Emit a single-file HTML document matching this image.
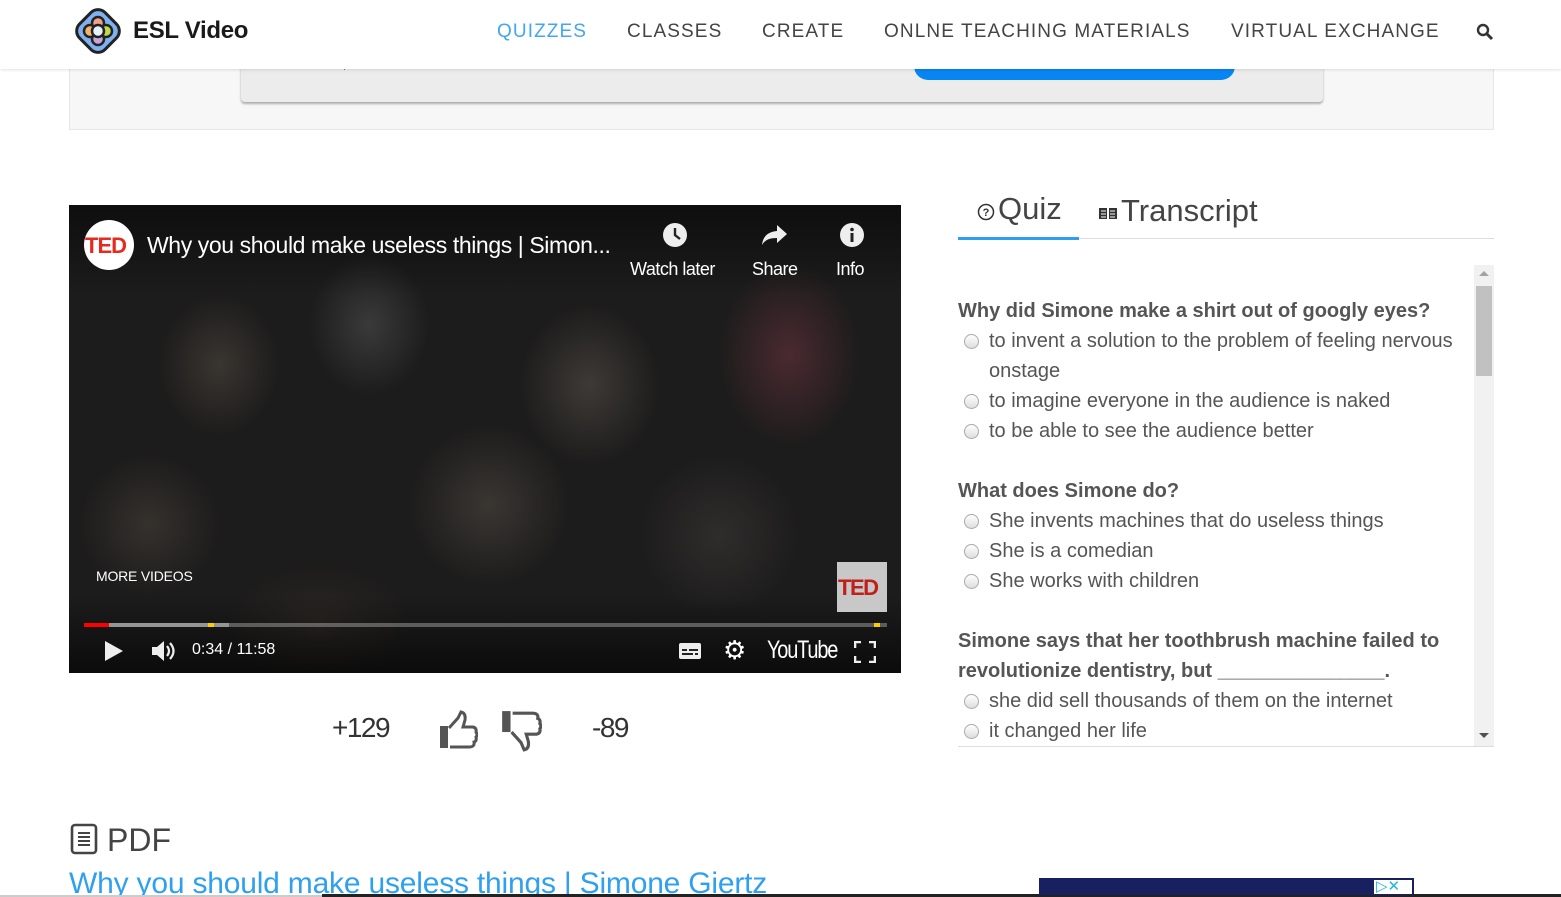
<!DOCTYPE html>
<html><head><meta charset="utf-8">
<style>
*{box-sizing:border-box;margin:0;padding:0}
html,body{width:1561px;height:897px;overflow:hidden;background:#fff;font-family:"Liberation Sans",Arial,sans-serif;position:relative}
.abs{position:absolute}
.nav{left:0;top:0;width:1561px;height:69px;background:#fff;box-shadow:0 1px 3px rgba(0,0,0,.12);z-index:5}
.nav a{position:absolute;top:21px;font-size:19px;letter-spacing:1.1px;color:#444;text-decoration:none}
.q{font-size:20px;color:#555;font-weight:bold;line-height:30px}
.o{font-size:20px;color:#555;line-height:30px;padding-left:31px;position:relative}
.o:before{content:"";position:absolute;left:6px;top:8px;width:13px;height:13px;border-radius:50%;border:1px solid #aaa;background:linear-gradient(#fff,#ddd)}
.vid{left:69px;top:205px;width:832px;height:468px;overflow:hidden;
background:
radial-gradient(ellipse 60px 70px at 150px 160px,#3a3530,transparent),
radial-gradient(ellipse 60px 70px at 300px 120px,#3b3a3a,transparent),
radial-gradient(ellipse 70px 80px at 520px 180px,#3e3a36,transparent),
radial-gradient(ellipse 70px 90px at 720px 150px,#4a2a30,transparent),
radial-gradient(ellipse 80px 80px at 420px 300px,#3a3632,transparent),
radial-gradient(ellipse 70px 70px at 80px 320px,#35312d,transparent),
radial-gradient(ellipse 80px 80px at 650px 330px,#2f2d2c,transparent),
radial-gradient(ellipse 90px 60px at 250px 420px,#2a2622,transparent),
#1d1c1c}
.w{color:#fff;position:absolute}
</style></head><body>
<div class="abs" style="left:69px;top:60px;width:1425px;height:70px;background:#f7f7f7;border:1px solid #e6e6e6"></div>
<div class="abs" style="left:241px;top:60px;width:1082px;height:42px;background:#ececec;border-radius:0 0 4px 4px;box-shadow:0 2px 2px rgba(0,0,0,.3)"></div>
<div class="abs" style="left:914px;top:60px;width:321px;height:20px;background:#0785f2;border-radius:0 0 14px 14px"></div>
<div class="abs" style="left:344px;top:64px;width:1px;height:6px;background:#777"></div>

<div class="abs nav">
<svg class="abs" style="left:72px;top:5px" width="52" height="52" viewBox="0 0 52 52">
<rect x="8" y="8" width="36" height="36" rx="10" transform="rotate(45 26 26)" fill="#7fb0f0" stroke="#222" stroke-width="3"/>
<circle cx="26" cy="18" r="6" fill="#f3a08a" stroke="#222" stroke-width="2.5"/>
<circle cx="34" cy="26" r="6" fill="#c5d84a" stroke="#222" stroke-width="2.5"/>
<circle cx="26" cy="34" r="6" fill="#c9a6d8" stroke="#222" stroke-width="2.5"/>
<circle cx="18" cy="26" r="6" fill="#f4b36a" stroke="#222" stroke-width="2.5"/>
<circle cx="26" cy="26" r="6" fill="#e6f2fb" stroke="#222" stroke-width="2.5"/>
</svg>
<div class="abs" style="left:133px;top:17px;font-size:24px;font-weight:bold;color:#1a1a1a;letter-spacing:-.3px">ESL Video</div>
<a style="left:497px;color:#42a5f5">QUIZZES</a>
<a style="left:627px">CLASSES</a>
<a style="left:762px">CREATE</a>
<a style="left:884px">ONLNE TEACHING MATERIALS</a>
<a style="left:1231px">VIRTUAL EXCHANGE</a>
<svg class="abs" style="left:1476px;top:23px" width="18" height="18" viewBox="0 0 18 18"><circle cx="7" cy="7" r="5" fill="none" stroke="#333" stroke-width="2.4"/><path d="M11 11l5 5" stroke="#333" stroke-width="3"/></svg>
</div>

<div class="abs vid">
<div class="abs" style="left:0;top:0;width:832px;height:90px;background:linear-gradient(rgba(0,0,0,.5),transparent)"></div>
<div class="abs" style="left:0;top:390px;width:832px;height:78px;background:linear-gradient(transparent,rgba(0,0,0,.6))"></div>
<div class="abs" style="left:15px;top:15px;width:50px;height:50px;border-radius:50%;background:#fff"></div>
<div class="w" style="left:16px;top:28px;font-size:22px;font-weight:bold;color:#e62b1e;letter-spacing:-1px">TED</div>
<div class="w" style="left:78px;top:27px;font-size:23px;letter-spacing:-.4px">Why you should make useless things | Simon...</div>
<svg class="abs" style="left:593px;top:17px" width="26" height="26"><circle cx="13" cy="13" r="12" fill="#eee"/><path d="M13 6v7l5 4" stroke="#222" stroke-width="2.4" fill="none"/></svg>
<svg class="abs" style="left:692px;top:18px" width="28" height="24"><path d="M16 2l10 9-10 9v-5c-8 0-12 2-15 7 1-8 5-13 15-14z" fill="#eee"/></svg>
<svg class="abs" style="left:770px;top:17px" width="26" height="26"><circle cx="13" cy="13" r="12" fill="#eee"/><rect x="11.5" y="11" width="3" height="9" fill="#222"/><circle cx="13" cy="7.5" r="1.8" fill="#222"/></svg>
<div class="w" style="left:561px;top:54px;font-size:18px;letter-spacing:-.5px">Watch later</div>
<div class="w" style="left:683px;top:54px;font-size:18px;letter-spacing:-.5px">Share</div>
<div class="w" style="left:767px;top:54px;font-size:18px;letter-spacing:-.5px">Info</div>
<div class="w" style="left:27px;top:363px;font-size:14px;letter-spacing:-.2px">MORE VIDEOS</div>
<div class="abs" style="left:768px;top:357px;width:50px;height:50px;background:#c8c8c8"></div>
<div class="w" style="left:769px;top:370px;font-size:22px;font-weight:bold;color:#c0201a;letter-spacing:-1.5px">TED</div>
<div class="abs" style="left:15px;top:418px;width:803px;height:4px;background:rgba(255,255,255,.3)"></div>
<div class="abs" style="left:15px;top:418px;width:145px;height:4px;background:rgba(255,255,255,.35)"></div>
<div class="abs" style="left:15px;top:418px;width:25px;height:4px;background:#f00"></div>
<div class="abs" style="left:139px;top:418px;width:6px;height:4px;background:#fc0"></div>
<div class="abs" style="left:805px;top:418px;width:6px;height:4px;background:#fc0"></div>
<svg class="abs" style="left:35px;top:435px" width="20" height="22"><path d="M1 1l18 10L1 21z" fill="#eee"/></svg>
<svg class="abs" style="left:82px;top:434px" width="26" height="24"><path d="M1 8h5l7-6v20l-7-6H1z" fill="#eee"/><path d="M16 7q4 5 0 10M19 4q7 8 0 16" stroke="#eee" stroke-width="2.2" fill="none"/></svg>
<div class="w" style="left:123px;top:436px;font-size:16px">0:34 / 11:58</div>
<svg class="abs" style="left:609px;top:436px" width="24" height="20"><rect x="1" y="2" width="22" height="16" rx="2" fill="#eee"/><path d="M4 9h5M11 9h9M4 13h11M17 13h3" stroke="#222" stroke-width="2"/></svg>
<div class="w" style="left:654px;top:430px;font-size:26px">&#9881;</div>
<div class="w" style="left:698px;top:431px;font-size:25px;letter-spacing:-1.5px;transform:scaleX(.8);transform-origin:left">YouTube</div>
<svg class="abs" style="left:785px;top:436px" width="22" height="22"><path d="M1 7V1h6M15 1h6v6M21 15v6h-6M7 21H1v-6" stroke="#eee" stroke-width="2.6" fill="none"/></svg>
</div>

<div class="abs" style="left:332px;top:712px;font-size:28px;color:#333;letter-spacing:-1.5px">+129</div>
<svg class="abs" style="left:438px;top:709px" width="40" height="42" viewBox="0 0 40 42"><rect x="2" y="17" width="8" height="22" fill="#555"/><path d="M11 19l9-10 3-6q5 1 4 8l-2 7h10q4 1 3 5 2 3 0 5 1 4-2 5 1 5-5 5H12" fill="none" stroke="#555" stroke-width="3"/></svg>
<svg class="abs" style="left:500px;top:709px" width="42" height="44" viewBox="0 0 40 42"><rect x="2" y="2" width="8" height="20" fill="#555"/><path d="M11 22l9 10 3 7q5-1 4-8l-2-7h10q4-1 3-5 2-3 0-5 1-4-2-5 1-5-5-5H12" fill="none" stroke="#555" stroke-width="3"/></svg>
<div class="abs" style="left:592px;top:712px;font-size:28px;color:#333;letter-spacing:-1.5px">-89</div>

<div class="abs" style="left:958px;top:238px;width:536px;height:1px;background:#ddd"></div>
<div class="abs" style="left:958px;top:237px;width:121px;height:3px;background:#2f9ef0"></div>
<svg class="abs" style="left:977px;top:203px" width="18" height="18"><circle cx="9" cy="9" r="7.5" fill="none" stroke="#333" stroke-width="1.5"/><text x="9" y="13" font-size="11" font-weight="bold" text-anchor="middle" fill="#333" font-family="Liberation Sans">?</text></svg>
<div class="abs" style="left:998px;top:191px;font-size:31px;color:#444">Quiz</div>
<svg class="abs" style="left:1098px;top:206px" width="20" height="14"><path d="M1 2h8v11H1zM11 2h8v11h-8z" fill="#333"/><path d="M3 5h5M3 8h5M3 11h5M12 5h5M12 8h5M12 11h5" stroke="#fff" stroke-width="1"/></svg>
<div class="abs" style="left:1121px;top:193px;font-size:31px;color:#444">Transcript</div>

<div class="abs" style="left:1474px;top:265px;width:20px;height:482px;background:#f1f1f1"></div>
<div class="abs" style="left:1476px;top:286px;width:16px;height:90px;background:#c1c1c1"></div>
<div class="abs" style="left:1479px;top:271px;border:5px solid transparent;border-bottom-color:#a3a3a3;border-top:0"></div>
<div class="abs" style="left:1479px;top:733px;border:5px solid transparent;border-top-color:#505050;border-bottom:0"></div>
<div class="abs" style="left:958px;top:746px;width:536px;height:1px;background:#ddd"></div>
<div class="abs" style="left:958px;top:296px;width:515px">
<div class="q">Why did Simone make a shirt out of googly eyes?</div>
<div class="o">to invent a solution to the problem of feeling nervous onstage</div>
<div class="o">to imagine everyone in the audience is naked</div>
<div class="o">to be able to see the audience better</div>
<div class="q" style="margin-top:30px">What does Simone do?</div>
<div class="o">She invents machines that do useless things</div>
<div class="o">She is a comedian</div>
<div class="o">She works with children</div>
<div class="q" style="margin-top:30px">Simone says that her toothbrush machine failed to revolutionize dentistry, but _______________.</div>
<div class="o">she did sell thousands of them on the internet</div>
<div class="o">it changed her life</div>
</div>

<svg class="abs" style="left:70px;top:823px" width="28" height="32"><rect x="2" y="2" width="24" height="28" rx="3" fill="none" stroke="#444" stroke-width="2.6"/><path d="M8 10h12M8 14h12M8 18h12M8 22h12" stroke="#444" stroke-width="2"/></svg>
<div class="abs" style="left:107px;top:822px;font-size:32px;color:#444">PDF</div>
<div class="abs" style="left:69px;top:867px;font-size:30px;color:#2fa0f0;white-space:nowrap;letter-spacing:-.2px">Why you should make useless things | Simone Giertz</div>
<div class="abs" style="left:0;top:895px;width:1561px;height:2px;background:#ccc"></div>
<div class="abs" style="left:322px;top:894px;width:1239px;height:3px;background:#222"></div>
<div class="abs" style="left:1039px;top:878px;width:375px;height:17px;background:#182060"></div>
<div class="abs" style="left:1373px;top:879px;width:40px;height:16px;background:#fff;border:1px solid #182060"></div>
<div class="abs" style="left:1376px;top:877px;font-size:15px;color:#1bb8e0">&#9655;&#10005;</div>
</body></html>
